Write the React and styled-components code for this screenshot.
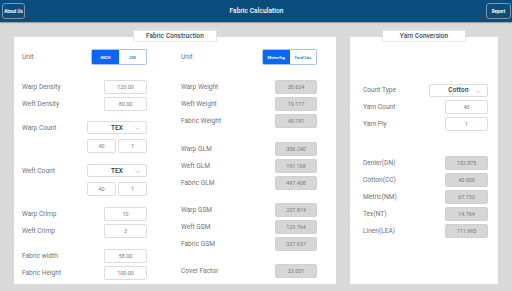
import React from "react";
import styled, { createGlobalStyle } from "styled-components";

const FONT = `Roboto, "Liberation Sans", Arial, sans-serif`;

const GlobalStyles = createGlobalStyle`
  html, body {
    margin: 0;
    padding: 0;
    background: #d9d9d9;
    font-family: ${FONT};
    overflow: hidden;
  }
  * { box-sizing: border-box; }
`;

const Page = styled.div`
  width: 512px;
  height: 291px;
  display: flex;
  flex-direction: column;
  background: #d9d9d9;
`;

const Header = styled.header`
  height: 22px;
  flex: none;
  display: grid;
  grid-template-columns: 1fr auto 1fr;
  align-items: center;
  padding: 0 1px 0 2px;
  background: #0b4d7c;
  box-shadow: 0 1px 1px rgba(0, 0, 0, 0.25);
`;

const HeadButton = styled.button`
  justify-self: ${(p) => (p.$right ? "end" : "start")};
  width: ${(p) => p.$w}px;
  height: 16px;
  padding: 0;
  border: 1px solid #7f95a9;
  border-radius: 3px;
  background: transparent;
  color: #fff;
  font-family: ${FONT};
  font-size: 4.5px;
  font-weight: 700;
`;

const Title = styled.h1`
  margin: 0;
  color: #fff;
  font-size: 6.5px;
  font-weight: 500;
  letter-spacing: 0.1px;
`;

const Main = styled.main`
  flex: 1;
  display: flex;
  gap: 14px;
  padding: 15px 14px 12px;
`;

const Panel = styled.section`
  position: relative;
  background: #fff;
  width: ${(p) => p.$w}px;
  padding: ${(p) => p.$pad};
  display: flex;
  gap: 34px;
`;

const Legend = styled.div`
  position: absolute;
  top: -7px;
  left: 50%;
  transform: translateX(-50%);
  width: ${(p) => p.$w}px;
  height: 12px;
  background: #fff;
  border: 1px solid #e2e2e2;
  border-bottom-color: #ececec;
  display: flex;
  align-items: center;
  justify-content: center;
  color: #444;
  font-size: 6.4px;
  font-weight: 500;
  letter-spacing: 0.1px;
`;

const Column = styled.div`
  width: ${(p) => p.$w}px;
  display: flex;
  flex-direction: column;
`;

const Row = styled.div`
  height: ${(p) => p.$h || 14}px;
  margin-top: ${(p) => p.$mt || 0}px;
  display: flex;
  align-items: center;
  justify-content: space-between;
`;

const Label = styled.span`
  color: #727272;
  font-size: 6.6px;
  font-weight: 400;
`;

const Box = styled.div`
  width: ${(p) => p.$w || 43}px;
  height: 14px;
  border: 1px solid ${(p) => (p.$out ? "#cfcfcf" : "#dcdcdc")};
  border-radius: 2px;
  background: ${(p) => (p.$out ? "#d6d6d6" : "#fff")};
  display: flex;
  align-items: center;
  justify-content: center;
  color: #7a7a7a;
  font-size: 5.4px;
`;

const Pair = styled.div`
  margin-top: 5px;
  display: flex;
  justify-content: flex-end;
  gap: 2px;
`;

const Select = styled.div`
  position: relative;
  width: ${(p) => p.$w}px;
  height: 13px;
  border: 1px solid #dcdcdc;
  border-radius: 2px;
  background: #fff;
  display: flex;
  align-items: center;
  justify-content: center;
  color: #333;
  font-size: 6.4px;
  font-weight: 500;
  letter-spacing: 0.2px;
`;

const Chevron = styled.svg`
  position: absolute;
  right: 6px;
  top: 5px;
`;

const Toggle = styled.div`
  width: ${(p) => p.$w}px;
  height: 16px;
  display: flex;
  border: 1px solid #a9c4ec;
  border-radius: 2px;
  overflow: hidden;
`;

const Seg = styled.div`
  flex: 1;
  display: flex;
  align-items: center;
  justify-content: center;
  background: ${(p) => (p.$on ? "#0668fb" : "#fff")};
  color: ${(p) => (p.$on ? "#fff" : "#2c8bd6")};
  font-size: 4.2px;
  font-weight: 700;
`;

const Field = ({ label, value, out, w, mt }) => (
  <Row $mt={mt}>
    <Label>{label}</Label>
    <Box $out={out} $w={w}>{value}</Box>
  </Row>
);

const Dropdown = ({ value, w }) => (
  <Select $w={w}>
    {value}
    <Chevron width="5" height="3" viewBox="0 0 5 3">
      <polyline points="0.4,0.4 2.5,2.5 4.6,0.4" fill="none" stroke="#aaa" strokeWidth="0.6" />
    </Chevron>
  </Select>
);

const CountField = ({ label, value, a, b, mt }) => (
  <div style={{ marginTop: mt }}>
    <Row $h={13}>
      <Label>{label}</Label>
      <Dropdown value={value} w={60} />
    </Row>
    <Pair>
      <Box $w={29}>{a}</Box>
      <Box $w={29}>{b}</Box>
    </Pair>
  </div>
);

const UnitRow = ({ left, right, w }) => (
  <Row $h={16}>
    <Label>Unit</Label>
    <Toggle $w={w}>
      <Seg $on>{left}</Seg>
      <Seg>{right}</Seg>
    </Toggle>
  </Row>
);

export default function App() {
  return (
    <Page>
      <GlobalStyles />
      <Header>
        <HeadButton $w={23}>About Us</HeadButton>
        <Title>Fabric Calculation</Title>
        <HeadButton $right $w={25}>Report</HeadButton>
      </Header>
      <Main>
        <Panel $w={322} $pad="12px 19px 4px 8px">
          <Legend $w={84}>Fabric Construction</Legend>
          <Column $w={125}>
            <UnitRow left="INCH" right="CM" w={56} />
            <Field label="Warp Density" value="120.00" mt={15} />
            <Field label="Weft Density" value="80.00" mt={3} />
            <CountField label="Warp Count" value="TEX" a="40" b="1" mt={10} />
            <CountField label="Weft Count" value="TEX" a="40" b="1" mt={11} />
            <Field label="Warp Crimp" value="10" mt={11} />
            <Field label="Weft Crimp" value="3" mt={3} />
            <Field label="Fabric width" value="58.00" mt={11} />
            <Field label="Fabric Height" value="100.00" mt={3} />
          </Column>
          <Column $w={136}>
            <UnitRow left="Meter/kg" right="Yard/Lbs" w={55} />
            <Field out w={42} label="Warp Weight" value="30.624" mt={15} />
            <Field out w={42} label="Weft Weight" value="19.117" mt={3} />
            <Field out w={42} label="Fabric Weight" value="49.741" mt={3} />
            <Field out w={42} label="Warp GLM" value="306.240" mt={14} />
            <Field out w={42} label="Weft GLM" value="191.168" mt={3} />
            <Field out w={42} label="Fabric GLM" value="497.408" mt={3} />
            <Field out w={42} label="Warp GSM" value="207.874" mt={13} />
            <Field out w={42} label="Weft GSM" value="129.764" mt={3} />
            <Field out w={42} label="Fabric GSM" value="337.637" mt={3} />
            <Field out w={42} label="Cover Factor" value="23.051" mt={13} />
          </Column>
        </Panel>
        <Panel $w={148} $pad="46px 10px 0 13px">
          <Legend $w={84}>Yarn Conversion</Legend>
          <Column $w={125}>
            <Row $h={14}>
              <Label>Count Type</Label>
              <Dropdown value="Cotton" w={59} />
            </Row>
            <Field label="Yarn Count" value="40" mt={3} />
            <Field label="Yarn Ply" value="1" mt={3} />
            <Field out label="Denier(DN)" value="132.875" mt={25} />
            <Field out label="Cotton(CC)" value="40.000" mt={3} />
            <Field out label="Metric(NM)" value="67.733" mt={3} />
            <Field out label="Tex(NT)" value="14.764" mt={3} />
            <Field out label="Linen(LEA)" value="111.985" mt={3} />
          </Column>
        </Panel>
      </Main>
    </Page>
  );
}
